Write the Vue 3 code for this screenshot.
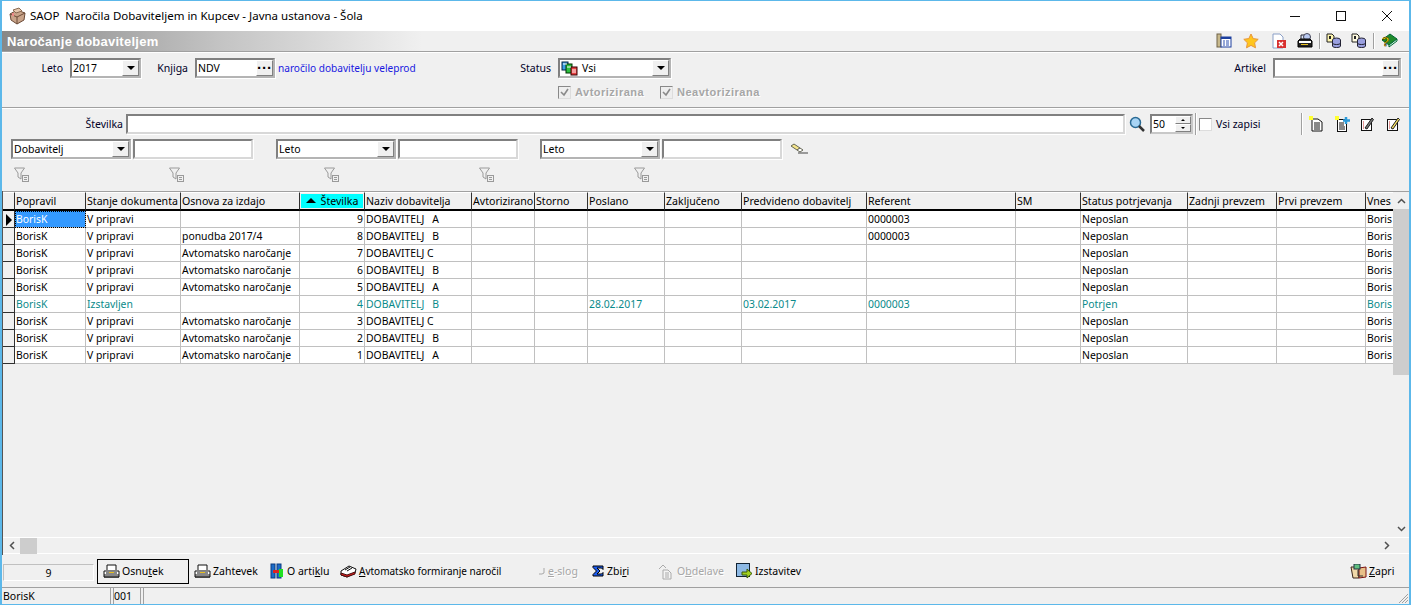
<script setup>
const cols = [
  { t: 'Popravil', w: 71, k: 'a' }, { t: 'Stanje dokumenta', w: 95, k: 'b' }, { t: 'Osnova za izdajo', w: 119, k: 'c' },
  { t: 'Številka', w: 65, k: 'n', right: true, sort: true }, { t: 'Naziv dobavitelja', w: 107, k: 'd' },
  { t: 'Avtorizirano', w: 63, k: 'e' }, { t: 'Storno', w: 53, k: 'f' }, { t: 'Poslano', w: 77, k: 'g' },
  { t: 'Zaključeno', w: 77, k: 'h' }, { t: 'Predvideno dobavitelj', w: 125, k: 'i' }, { t: 'Referent', w: 149, k: 'j' },
  { t: 'SM', w: 65, k: 'l' }, { t: 'Status potrjevanja', w: 107, k: 'm' }, { t: 'Zadnji prevzem', w: 89, k: 'o' },
  { t: 'Prvi prevzem', w: 89, k: 'p' }, { t: 'Vnes', w: 27, k: 'q' }
]
const base = { a: 'BorisK', b: 'V pripravi', m: 'Neposlan', q: 'Boris' }
const rows = [
  { ...base, n: 9, d: 'DOBAVITELJ   A', j: '0000003', sel: true },
  { ...base, c: 'ponudba 2017/4', n: 8, d: 'DOBAVITELJ   B', j: '0000003' },
  { ...base, c: 'Avtomatsko naročanje', n: 7, d: 'DOBAVITELJ C' },
  { ...base, c: 'Avtomatsko naročanje', n: 6, d: 'DOBAVITELJ   B' },
  { ...base, c: 'Avtomatsko naročanje', n: 5, d: 'DOBAVITELJ   A' },
  { ...base, b: 'Izstavljen', n: 4, d: 'DOBAVITELJ   B', g: '28.02.2017', i: '03.02.2017', j: '0000003', m: 'Potrjen', teal: true },
  { ...base, c: 'Avtomatsko naročanje', n: 3, d: 'DOBAVITELJ C' },
  { ...base, c: 'Avtomatsko naročanje', n: 2, d: 'DOBAVITELJ   B' },
  { ...base, c: 'Avtomatsko naročanje', n: 1, d: 'DOBAVITELJ   A' }
]
const funnels = [1, 2, 3, 4, 5]
</script>

<template>
  <div class="win">
    <div class="titlebar">
      <svg class="appicon" width="18" height="18" viewBox="0 0 18 18"><path d="M1 7l7-4 8 3-1 7-7 4-6-4z" fill="#c9a48a" stroke="#6b4a36"/><path d="M1 7l7 3 8-4M8 10v7" fill="none" stroke="#6b4a36"/><path d="M4 3l6-2 3 3-6 2z" fill="#e6c8ae" stroke="#8a6a52"/><rect x="3" y="6" width="2" height="3" fill="#e88"/></svg>
      <span class="wintitle">SAOP&nbsp; Naročila Dobaviteljem in Kupcev - Javna ustanova - Šola</span>
      <div class="winctl">
        <svg width="12" height="12" viewBox="0 0 12 12"><path d="M1 6.500h10" stroke="#111"/></svg>
        <svg width="12" height="12" viewBox="0 0 12 12"><rect x="1.500" y="1.500" width="9" height="9" fill="none" stroke="#111"/></svg>
        <svg width="12" height="12" viewBox="0 0 12 12"><path d="M1 1l10 10M11 1L1 11" stroke="#111"/></svg>
      </div>
    </div>

    <div class="head">
      <span class="headtitle">Naročanje dobaviteljem</span>
      <div class="headicons">
        <svg width="16" height="16" viewBox="0 0 16 16"><rect x="1" y="1" width="4" height="13" fill="#c8b98c" stroke="#6e6248"/><rect x="5" y="4" width="10" height="10" fill="#fff" stroke="#1c3f9e"/><rect x="5" y="4" width="10" height="2" fill="#1c3f9e"/><path d="M7 8h2M7 10h2M7 12h2M10 8h3M10 10h3M10 12h3" stroke="#2c50b0"/></svg>
        <svg width="16" height="16" viewBox="0 0 16 16"><path d="M8 1l2.200 4.600 5 .7-3.600 3.500.9 5L8 12.400l-4.500 2.400.9-5L.8 6.300l5-.7z" fill="#ffc61e" stroke="#e8963a"/></svg>
        <svg width="14" height="16" viewBox="0 0 14 16"><path d="M1 1h7l3 3v11H1z" fill="#fff" stroke="#8ba0c8"/><rect x="5" y="7" width="9" height="8" fill="#d83030"/><path d="M7 9l4 4M11 9l-4 4" stroke="#fff" stroke-width="1.500"/></svg>
        <svg width="16" height="16" viewBox="0 0 16 16"><path d="M4 6V2h7v4" fill="#dfe8f8" stroke="#223"/><circle cx="10" cy="4" r="3.500" fill="#b8c8f0" stroke="#445"/><path d="M1 8l2-2h10l2 2v6H1z" fill="#222" stroke="#000"/><rect x="2" y="8" width="12" height="2" fill="#fff"/><rect x="4" y="11" width="7" height="1" fill="#e8c020"/></svg>
        <span class="vsep"></span>
        <svg width="15" height="16" viewBox="0 0 15 16"><path d="M1 1h5l2 2v6H1z" fill="#fff7b0" stroke="#222"/><path d="M3 3h2v3H3z" fill="#222"/><ellipse cx="10.500" cy="7" rx="4" ry="2" fill="#9aa0e0" stroke="#223"/><path d="M6.500 7v6c0 2 8 2 8 0V7" fill="#9aa0e0" stroke="#223"/><path d="M6.500 10c0 2 8 2 8 0" fill="none" stroke="#223"/></svg>
        <svg width="15" height="16" viewBox="0 0 15 16"><path d="M1 1h5l2 2v6H1z" fill="#fffbe0" stroke="#222"/><path d="M3 3h2v3H3z" fill="#222"/><ellipse cx="10.500" cy="7" rx="4" ry="2" fill="#9aa0e0" stroke="#223"/><path d="M6.500 7v6c0 2 8 2 8 0V7" fill="#9aa0e0" stroke="#223"/><path d="M6.500 10c0 2 8 2 8 0" fill="none" stroke="#223"/></svg>
        <span class="vsep"></span>
        <svg class="book" width="17" height="16" viewBox="0 0 17 16"><path d="M1 7l8-6 7 5-8 6z" fill="#1f8a2a" stroke="#063"/><path d="M8 12l8-6v2l-8 6z" fill="#dfe" stroke="#063"/><text x="1" y="13" class="qmark">?</text></svg>
      </div>
    </div>

    <section class="panel top">
      <div class="toprow">
        <label class="lb r">Leto</label>
        <div class="combo"><span class="val">2017</span><span class="drop"><i></i></span></div>
        <label class="lb r">Knjiga</label>
        <div class="combo"><span class="val">NDV</span><span class="dots">···</span></div>
        <span class="link">naročilo dobavitelju veleprod</span>
        <label class="lb r">Status</label>
        <div class="combo">
          <svg class="stat" width="17" height="15" viewBox="0 0 17 15"><rect x="1" y="1" width="6" height="8" fill="#3aa0e8" stroke="#024"/><rect x="5" y="3" width="6" height="9" fill="#2cc040" stroke="#030"/><rect x="10" y="6" width="6" height="8" fill="#e84040" stroke="#300"/><path d="M2 3h4M6 6h4M11 9h4M11 11h4" stroke="#fff"/></svg>
          <span class="val">Vsi</span><span class="drop"><i></i></span>
        </div>
        <label class="lb r">Artikel</label>
        <div class="combo"><span class="val"></span><span class="dots">···</span></div>
      </div>
      <div class="checks">
        <span class="chk dis"><svg width="9" height="9" viewBox="0 0 9 9"><path d="M1 4l3 3 4-6" fill="none" stroke="#8a8a8a" stroke-width="1.600"/></svg></span>
        <span class="dtext">Avtorizirana</span>
        <span class="chk dis"><svg width="9" height="9" viewBox="0 0 9 9"><path d="M1 4l3 3 4-6" fill="none" stroke="#8a8a8a" stroke-width="1.600"/></svg></span>
        <span class="dtext">Neavtorizirana</span>
      </div>
    </section>

    <section class="filters">
      <div class="frow1">
        <label class="lb r tight">Številka</label>
        <div class="field"></div>
        <svg class="lens" width="16" height="17" viewBox="0 0 16 17"><circle cx="6.500" cy="6.500" r="5" fill="#a8d4f4" stroke="#2a6a94" stroke-width="1.500"/><path d="M10 10l5 5" stroke="#333" stroke-width="2.500"/></svg>
        <div class="spin"><span class="val">50</span><span class="spinbtns"><b><i class="up"></i></b><b><i></i></b></span></div>
        <span class="vsep tall"></span>
        <span class="chk"></span>
        <span class="lb">Vsi zapisi</span>
        <span class="vsep tall"></span>
        <svg width="14" height="16" viewBox="0 0 14 16"><path d="M3 3h6l4 3v9H3z" fill="#fff" stroke="#111"/><path d="M5 7h6M5 9h6M5 11h6M5 13h6" stroke="#111"/><rect x="0" y="0" width="4" height="4" fill="#ffff30"/></svg>
        <svg width="15" height="16" viewBox="0 0 15 16"><rect x="2.500" y="3.500" width="9" height="12" fill="#fff" stroke="#111"/><path d="M4 7h5M4 9h5M4 11h6M4 13h6" stroke="#111"/><rect x="0" y="0" width="4" height="4" fill="#ffff30"/><path d="M11 1v7M8 4.500h7" stroke="#2c9ad8" stroke-width="2.500"/></svg>
        <svg width="14" height="16" viewBox="0 0 14 16"><rect x="1.500" y="3.500" width="10" height="11" fill="#fff" stroke="#111"/><path d="M3 6h1M3 8h1M3 10h1M3 12h1" stroke="#c33"/><path d="M5 12l7-10 1.500 1.500L7 13z" fill="#777" stroke="#222"/></svg>
        <svg width="14" height="16" viewBox="0 0 14 16"><rect x="1.500" y="3.500" width="10" height="11" fill="#fff" stroke="#111"/><path d="M3 6h1M3 8h1M3 10h1M3 12h1" stroke="#c33"/><path d="M5 12l7-10 1.500 1.500L7 13z" fill="#f4e060" stroke="#222"/></svg>
      </div>
      <div class="frow2">
        <div class="combo"><span class="val">Dobavitelj</span><span class="drop"><i></i></span></div>
        <div class="field"></div>
        <span></span>
        <div class="combo"><span class="val">Leto</span><span class="drop"><i></i></span></div>
        <div class="field"></div>
        <span></span>
        <div class="combo"><span class="val">Leto</span><span class="drop"><i></i></span></div>
        <div class="field"></div>
        <svg class="eraser" width="18" height="12" viewBox="0 0 18 12"><path d="M1 3l3-2 6 4-3 2z" fill="#f4e48a" stroke="#665"/><path d="M7 7l3-2 3 2-3 2z" fill="#fff" stroke="#665"/><path d="M8 10h10" stroke="#444"/></svg>
      </div>
      <div class="frow3">
        <svg v-for="f in funnels" :key="f" width="16" height="16" viewBox="0 0 16 16"><path d="M.5 1h10L7 6v6L4 10V6z" fill="#f0f0f0" stroke="#9a9a9a"/><rect x="8.500" y="8.500" width="6" height="6" fill="#f0f0f0" stroke="#9a9a9a"/><path d="M10 10.500h3M10 12.500h3" stroke="#9a9a9a"/></svg>
      </div>
    </section>

    <section class="gridwrap">
      <div class="gridmain">
        <table class="grid">
          <colgroup>
            <col class="indcol" />
            <col v-for="c in cols" :key="c.k" :style="{ width: c.w + 'px' }" />
          </colgroup>
          <thead>
            <tr>
              <th class="ind"></th>
              <th v-for="c in cols" :key="c.k" :class="{ sorted: c.sort }">
                <span v-if="c.sort" class="tri"></span>{{ c.t }}
              </th>
            </tr>
          </thead>
          <tbody>
            <tr v-for="r in rows" :key="r.n" :class="{ teal: r.teal }">
              <td class="ind"><span v-if="r.sel" class="arrow"></span></td>
              <td v-for="c in cols" :key="c.k" :class="{ right: c.right, sel: r.sel && c.k === 'a' }">{{ r[c.k] }}</td>
            </tr>
          </tbody>
        </table>
        <div class="vscroll">
          <span class="sbtn"><svg width="9" height="6" viewBox="0 0 9 6"><path d="M1 5l3.500-3.500L8 5" fill="none" stroke="#505050" stroke-width="1.500"/></svg></span>
          <span class="vthumb"></span>
          <span class="sbtn bottom"><svg width="9" height="6" viewBox="0 0 9 6"><path d="M1 1l3.500 3.500L8 1" fill="none" stroke="#505050" stroke-width="1.500"/></svg></span>
        </div>
      </div>
      <div class="hscroll">
        <svg width="6" height="9" viewBox="0 0 6 9"><path d="M5 1L1.500 4.500 5 8" fill="none" stroke="#505050" stroke-width="1.500"/></svg>
        <span class="hthumb"></span>
        <svg class="hright" width="6" height="9" viewBox="0 0 6 9"><path d="M1 1l3.500 3.500L1 8" fill="none" stroke="#505050" stroke-width="1.500"/></svg>
      </div>
    </section>

    <footer class="tools">
      <div class="count">9</div>
      <div class="tbtn default">
        <svg width="17" height="15" viewBox="0 0 17 15"><path d="M4 6V1h9v5" fill="#fff" stroke="#111"/><path d="M1 7h15v6H1z" fill="#fff" stroke="#111"/><path d="M3 9h11M1 11h15M1 13h15" stroke="#111"/><rect x="6" y="8" width="5" height="1" fill="#e8c020"/></svg>
        <span>Osnu<u>t</u>ek</span>
      </div>
      <div class="tbtn">
        <svg width="17" height="15" viewBox="0 0 17 15"><path d="M4 6V1h9v5" fill="#fff" stroke="#111"/><path d="M1 7h15v6H1z" fill="#fff" stroke="#111"/><path d="M3 9h11M1 11h15M1 13h15" stroke="#111"/><rect x="6" y="8" width="5" height="1" fill="#e8c020"/></svg>
        <span>Zahtevek</span>
      </div>
      <div class="tbtn wide">
        <svg width="14" height="17" viewBox="0 0 14 17"><rect x="1" y="1" width="4" height="14" fill="#1c6cc8" stroke="#0a3a80"/><rect x="7" y="1" width="4" height="14" fill="#1c6cc8" stroke="#0a3a80"/><rect x="3" y="7" width="6" height="3" fill="#d22"/><rect x="9" y="6" width="4" height="8" fill="#20e020"/></svg>
        <span>O arti<span class="u">k</span>lu</span>
      </div>
      <div class="tbtn long">
        <svg width="17" height="13" viewBox="0 0 17 13"><path d="M1 6l8-5 7 3-1 4-8 4-6-2z" fill="#fff" stroke="#111"/><path d="M1 8l6 2 8-3v2l-8 3-6-2z" fill="#d81c1c" stroke="#411"/><path d="M5 5l5-3M7 6l5-3" stroke="#111"/></svg>
        <span><u>A</u>vtomatsko formiranje naročil</span>
      </div>
      <div class="tbtn off">
        <svg width="8" height="10" viewBox="0 0 8 10"><path d="M1 8h3l2-1V2" fill="none" stroke="#a8a8a8"/></svg>
        <span><u>e</u>-slog</span>
      </div>
      <div class="tbtn wide">
        <svg width="12" height="12" viewBox="0 0 12 12"><path d="M1 1h10v3.500L9.500 3H5l3 3-3 3h4.500L11 7.500V11H1V9.500L4.500 6 1 2.500z" fill="#1c5cf0" stroke="#000"/></svg>
        <span>Zbi<u>r</u>i</span>
      </div>
      <div class="tbtn off">
        <svg width="17" height="17" viewBox="0 0 17 17"><path d="M1 6l4-4M5 2l3 3" fill="none" stroke="#aaa"/><path d="M5 7h5l3 3v6H5z" fill="#f4f4f4" stroke="#aaa"/><path d="M7 10h4M7 12h4M7 14h4" stroke="#aaa"/></svg>
        <span>O<u>b</u>delave</span>
      </div>
      <div class="tbtn">
        <svg width="17" height="17" viewBox="0 0 17 17"><rect x=".5" y=".5" width="13" height="13" fill="#8cb8e4" stroke="#123"/><path d="M6 9h5V6l5 4.500L11 15v-3H6z" fill="#a0d020" stroke="#3a5a08"/></svg>
        <span>Izstavitev</span>
      </div>
      <div class="tbtn">
        <svg width="17" height="15" viewBox="0 0 17 15"><path d="M1 3h6l2 1v10H3z" fill="#f0d8a8" stroke="#3a2418"/><path d="M9 4l7-1v10l-7 1z" fill="#e8c088" stroke="#7a1010"/><rect x="4" y="0" width="6" height="5" fill="#60c080" stroke="#234"/><path d="M8 6v6h5" fill="none" stroke="#333"/></svg>
        <span><u>Z</u>apri</span>
      </div>
    </footer>

    <div class="status">
      <span class="s1">BorisK</span>
      <span class="s2">001</span>
      <span class="s3"></span>
      <svg class="grip" width="12" height="12" viewBox="0 0 12 12"><path d="M11 2L2 11M11 5l-6 6M11 8l-3 3" stroke="#a0a0a0"/></svg>
    </div>
  </div>
</template>

<style>
html, body { margin: 0; background: #f0f0f0; }
</style>

<style scoped>
* { box-sizing: border-box; }
.win {
  width: 1411px; height: 605px; overflow: hidden; display: flex; flex-direction: column;
  background: #f0f0f0; border: 1px solid #5cb8ea; border-right-width: 2px; border-left-width: 2px;
  font: 10.5px/14px "Noto Sans", "Liberation Sans", sans-serif; color: #000;
}
.titlebar { height: 30px; background: #fff; display: flex; align-items: center; margin: 0 -1px; padding-left: 8px; }
.appicon { margin-right: 3px; }
.wintitle { font-size: 11.500px; color: #000; }
.winctl { margin-left: auto; display: flex; gap: 34px; padding-right: 17px; }
.head {
  height: 21px; display: flex; align-items: center; padding: 0 11px 0 5px;
  background: linear-gradient(90deg, #888 0, #c4c4c4 220px, #f0f0f0 420px);
  border-bottom: 1px solid #a0a0a0;
}
.headtitle { color: #fff; font: bold 13px "Liberation Sans", sans-serif; letter-spacing: .25px; }
.headicons {
  margin-left: auto; display: grid; align-items: center;
  grid-template-columns: 27px 29px 25px 22px 7px 25px 22px 8px 17px;
}
.book { overflow: visible; }
.vsep { width: 1px; height: 16px; background: #a0a0a0; box-shadow: 1px 0 #fff; }
.vsep.tall { height: 22px; }
.panel.top { height: 56px; border-top: 1px solid #fff; border-bottom: 1px solid #a0a0a0; }
.toprow {
  display: grid; height: 20px; margin-top: 5px; align-items: center;
  grid-template-columns: 68px 71px 54px 80px 237px 46px 113px 602px 128px;
}
.lb { white-space: nowrap; color: #000028; }
.lb.r { text-align: right; padding-right: 7px; }
.lb.tight { padding-right: 3px; }
.combo {
  height: 20px; display: flex; align-items: stretch; background: #fff;
  border: 2px solid #808080; border-right-color: #b4b4b4; border-bottom-color: #b4b4b4;
  box-shadow: 1px 1px 0 #fff;
}
.val { flex: 1; padding: 1px 0 0 1px; line-height: 15px; white-space: nowrap; color: #000; overflow: hidden; }
.stat { margin: 0 3px 0 1px; align-self: center; }
.drop, .dots {
  width: 17px; background: #f0f0f0; border-left: 1px solid #fff; border-top: 1px solid #fff;
  border-right: 1px solid #808080; border-bottom: 1px solid #808080; display: flex; align-items: center; justify-content: center;
}
.drop i { border: 4px solid transparent; border-top-color: #000; border-bottom-width: 0; }
.dots { font: bold 15px/12px "Liberation Sans", sans-serif; color: #000; }
.link { color: #1818e0; padding-left: 3px; white-space: nowrap; font-size: 10.100px; }
.checks {
  display: grid; grid-template-columns: 12px 80px 12px 100px; column-gap: 5px; align-items: center;
  margin: 7px 0 0 556px; height: 14px;
}
.chk { width: 13px; height: 13px; background: #fff; border: 1px solid #888; border-right-color: #ddd; border-bottom-color: #ddd; display: flex; align-items: center; justify-content: center; }
.chk.dis { background: #eee; }
.dtext { color: #a6a6a6; font: bold 11px "Liberation Sans", sans-serif; letter-spacing: .5px; text-shadow: 1px 1px 0 #fff; white-space: nowrap; }
.filters { height: 83px; border-top: 1px solid #fff; }
.field { height: 20px; background: #fff; border: 2px solid #808080; border-right-color: #d8d8d8; border-bottom-color: #d8d8d8; box-shadow: 1px 1px 0 #fff; }
.frow1 {
  display: grid; height: 21px; margin-top: 4px; align-items: center;
  grid-template-columns: 124px 999px 25px 45px 4px 17px 85px 8px 26px 25px 26px 16px;
}
.lens { margin-left: 4px; }
.spin { width: 43px; height: 20px; display: flex; background: #fff; border: 2px solid #808080; border-right-color: #c8c8c8; border-bottom-color: #c8c8c8; }
.spinbtns { width: 16px; display: flex; flex-direction: column; }
.spinbtns b { flex: 1; background: #f0f0f0; border: 1px solid; border-color: #fff #808080 #808080 #fff; display: flex; align-items: center; justify-content: center; }
.spinbtns i { border: 2px solid transparent; border-top-color: #000; border-bottom-width: 0; }
.spinbtns i.up { border-top-width: 0; border-bottom: 2px solid #000; }
.frow2 { display: grid; height: 20px; margin: 5px 0 0 9px; align-items: center; grid-template-columns: 120px 120px 19px 120px 120px 18px 120px 120px 25px; column-gap: 2px; }
.eraser { margin-left: 6px; }
.frow3 { display: flex; gap: 139px; margin: 8px 0 0 12px; }
.gridwrap { height: 364px; border-left: 1px solid #555; display: flex; flex-direction: column; }
.gridmain { display: flex; height: 347px; border-top: 1px solid #a0a0a0; border-bottom: 1px solid #fff; }
.grid { width: 1390px; table-layout: fixed; border-collapse: separate; border-spacing: 0; flex: none; align-self: flex-start; }
.indcol { width: 12px; }
th, td { padding: 0 0 0 1px; overflow: hidden; white-space: pre; font-weight: normal; text-align: left; }
th { height: 19px; background: #f0f0f0; border-right: 1px solid #303030; border-bottom: 2px solid #000; border-top: 1px solid #fff; font-size: 10.600px; }
th:last-child { border-right: 0; }
th.sorted { background: #00ffff; box-shadow: inset 0 0 0 1px #f0f0f0; text-align: center; padding: 0; }
.tri { display: inline-block; border: 5px solid transparent; border-bottom: 5px solid #000; border-top: 0; margin: 0 5px 2px 0; }
td { height: 17px; background: #fff; border-right: 1px solid #c0c0c0; border-bottom: 1px solid #c0c0c0; line-height: 16px; font-size: 10.400px; }
td:last-child { border-right: 0; }
td.right { text-align: right; padding: 0 1px 0 0; }
td.ind, th.ind { background: #f0f0f0; border-right: 1px solid #303030; padding: 0; }
td.ind { border-bottom: 1px solid #303030; }
.arrow { display: block; width: 0; margin: 2px 0 0 3px; border: 6px solid transparent; border-left: 6px solid #000; border-right: 0; }
.teal td:not(.ind) { color: #0a8a8a; }
td.sel { background: #3399ff; color: #fff; outline: 1px dotted #000; outline-offset: -1px; }
.vscroll { width: 16px; display: flex; flex-direction: column; }
.sbtn { height: 17px; display: flex; align-items: center; justify-content: center; }
.sbtn.bottom { margin-top: auto; }
.vthumb { height: 166px; background: #cdcdcd; }
.hscroll { height: 16px; display: flex; align-items: center; padding-left: 6px; border-bottom: 1px solid #fff; }
.hthumb { width: 17px; height: 16px; background: #cdcdcd; margin-left: 5px; }
.hright { margin-left: auto; margin-right: 19px; }
.tools {
  height: 32px; display: grid; align-items: center; padding-left: 1px;
  grid-template-columns: 91px 92px 76px 70px 198px 54px 66px 78px 614px auto;
}
.count { height: 17px; margin-top: 3px; text-align: center; border: 1px solid #c0c0c0; border-right-color: #fff; border-bottom-color: #fff; line-height: 16px; }
.tbtn { display: flex; align-items: center; gap: 2px; white-space: nowrap; height: 25px; padding-left: 8px; }
.tbtn.wide { gap: 3px; }
.tbtn.long { font-size: 10px; }
.tbtn.default { border: 1px solid #000; margin-left: 3px; margin-right: -3px; padding-left: 5px; }
.tbtn.off { color: #a6a6a6; text-shadow: 1px 1px 0 #fff; }
.tbtn .u { text-decoration: underline; }
.status { height: 17px; display: flex; border-top: 1px solid #a0a0a0; position: relative; line-height: 16px; }
.s1 { width: 109px; padding-left: 1px; border-right: 1px solid #a0a0a0; }
.s2 { width: 28px; margin-left: 2px; border-left: 1px solid #a0a0a0; border-right: 1px solid #a0a0a0; }
.s3 { flex: 1; margin-left: 2px; border-left: 1px solid #a0a0a0; }
.grip { position: absolute; right: 0; bottom: 0; }
.qmark { font: bold 12px "Liberation Sans", sans-serif; fill: #ffe000; stroke: #000; stroke-width: .4px; }
</style>
